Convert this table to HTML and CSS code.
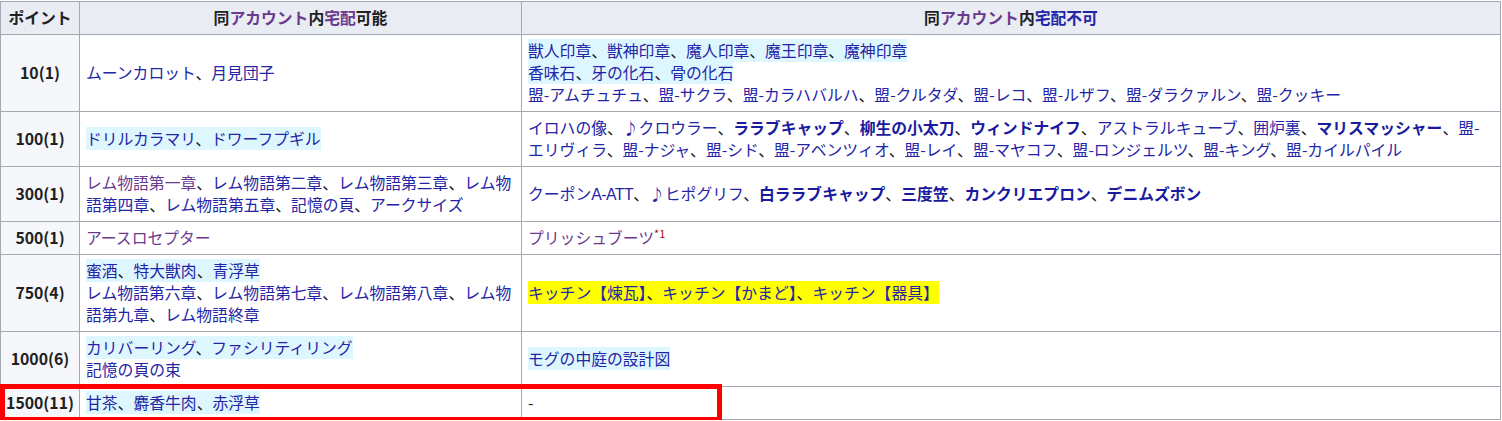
FILE: index.html
```html
<!DOCTYPE html>
<html lang="ja">
<head>
<meta charset="utf-8">
<title>ポイント</title>
<link rel="stylesheet" href="styles.css">
</head>
<body>
<div class="wrap">
<table class="points">
<colgroup><col class="c1"><col class="c2"><col class="c3"></colgroup>
<thead>
<tr>
<th>ポイント</th>
<th>同<a class="v">アカウント</a>内<a class="v">宅配</a>可能</th>
<th>同<a class="v">アカウント</a>内<a>宅配不可</a></th>
</tr>
</thead>
<tbody>
<tr>
<th>10(1)</th>
<td><a>ムーンカロット</a>、<a>月見団子</a></td>
<td><span class="hl"><a>獣人印章</a>、<a>獣神印章</a>、<a>魔人印章</a>、<a>魔王印章</a>、<a>魔神印章</a></span><br><span class="hl"><a>香味石</a>、<a>牙の化石</a>、<a>骨の化石</a></span><br><a>盟-アムチュチュ</a>、<a>盟-サクラ</a>、<a>盟-カラハバルハ</a>、<a>盟-クルタダ</a>、<a>盟-レコ</a>、<a>盟-ルザフ</a>、<a>盟-ダラクァルン</a>、<a>盟-クッキー</a></td>
</tr>
<tr>
<th>100(1)</th>
<td><span class="hl"><a>ドリルカラマリ</a>、<a>ドワーフプギル</a></span></td>
<td><a>イロハの像</a>、<a>♪クロウラー</a>、<a class="b">ララブキャップ</a>、<a class="b">柳生の小太刀</a>、<a class="b">ウィンドナイフ</a>、<a>アストラルキューブ</a>、<a>囲炉裏</a>、<a class="b">マリスマッシャー</a>、<a>盟-エリヴィラ</a>、<a>盟-ナジャ</a>、<a>盟-シド</a>、<a>盟-アベンツィオ</a>、<a>盟-レイ</a>、<a>盟-マヤコフ</a>、<a>盟-ロンジェルツ</a>、<a>盟-キング</a>、<a>盟-カイルパイル</a></td>
</tr>
<tr>
<th>300(1)</th>
<td><a class="v">レム物語第一章</a>、<a>レム物語第二章</a>、<a>レム物語第三章</a>、<a>レム物語第四章</a>、<a>レム物語第五章</a>、<a>記憶の頁</a>、<a>アークサイズ</a></td>
<td><a>クーポン<span class="lat">A-ATT</span></a>、<a>♪ヒポグリフ</a>、<a class="b">白ララブキャップ</a>、<a class="b">三度笠</a>、<a class="b">カンクリエプロン</a>、<a class="b">デニムズボン</a></td>
</tr>
<tr>
<th>500(1)</th>
<td><a class="v">アースロセプター</a></td>
<td><a class="v">プリッシュブーツ</a><sup class="note">*1</sup></td>
</tr>
<tr>
<th>750(4)</th>
<td><span class="hl"><a>蜜酒</a>、<a>特大獣肉</a>、<a>青浮草</a></span><br><a>レム物語第六章</a>、<a>レム物語第七章</a>、<a>レム物語第八章</a>、<a>レム物語第九章</a>、<a>レム物語終章</a></td>
<td><span class="yl"><a>キッチン【煉瓦】</a>、<a>キッチン【かまど】</a>、<a>キッチン【器具】</a></span></td>
</tr>
<tr>
<th>1000(6)</th>
<td><span class="hl"><a>カリバーリング</a>、<a>ファシリティリング</a></span><br><a>記憶の頁の束</a></td>
<td><span class="hl"><a>モグの中庭の設計図</a></span></td>
</tr>
<tr>
<th>1500(11)</th>
<td><span class="hl"><a>甘茶</a>、<a>麝香牛肉</a>、<a>赤浮草</a></span></td>
<td>-</td>
</tr>
</tbody>
</table>
<div class="mark"></div>
</div>
</body>
</html>
```

FILE: styles.css
```css
html, body {
  margin: 0;
  padding: 0;
  background: #ffffff;
}

body {
  font-family: "Noto Sans CJK JP", "Noto Sans", sans-serif;
  font-size: 15.8px;
  color: #202122;
}

.wrap {
  position: relative;
  width: 1502px;
}

.points {
  border-collapse: collapse;
  table-layout: fixed;
  width: 1501px;
  margin: 1px 0 0 0;
  line-height: 22px;
}

.c1 { width: 79px; }
.c2 { width: 442px; }
.c3 { width: auto; }

.points th,
.points td {
  border: 1px solid #a2a9b1;
  padding: 5px 6px;
  vertical-align: middle;
}

.points thead th {
  background: #eaecf4;
  text-align: center;
  font-weight: bold;
  padding: 5px 6px;
}

.points tbody th {
  background: #f6f7fb;
  text-align: center;
  font-weight: bold;
  padding: 5px 2px;
  white-space: nowrap;
}

.points td {
  text-align: left;
}

.points a {
  color: #2424a6;
  text-decoration: none;
}

.points a.v {
  color: #6a3a8e;
}

.points a.b {
  font-weight: bold;
  color: #1a1a9e;
}

.hl {
  background: #def7ff;
}

.yl {
  background: #ffff00;
}

.lat {
  font-family: "Liberation Sans Narrow", "Liberation Sans", sans-serif;
  letter-spacing: -0.5px;
}

.note {
  color: #a01010;
  font-size: 11px;
  line-height: 0;
  vertical-align: super;
}

.mark {
  position: absolute;
  left: 0;
  top: 383px;
  width: 722px;
  height: 38px;
  box-sizing: border-box;
  border: 5px solid #ff0000;
}
```
